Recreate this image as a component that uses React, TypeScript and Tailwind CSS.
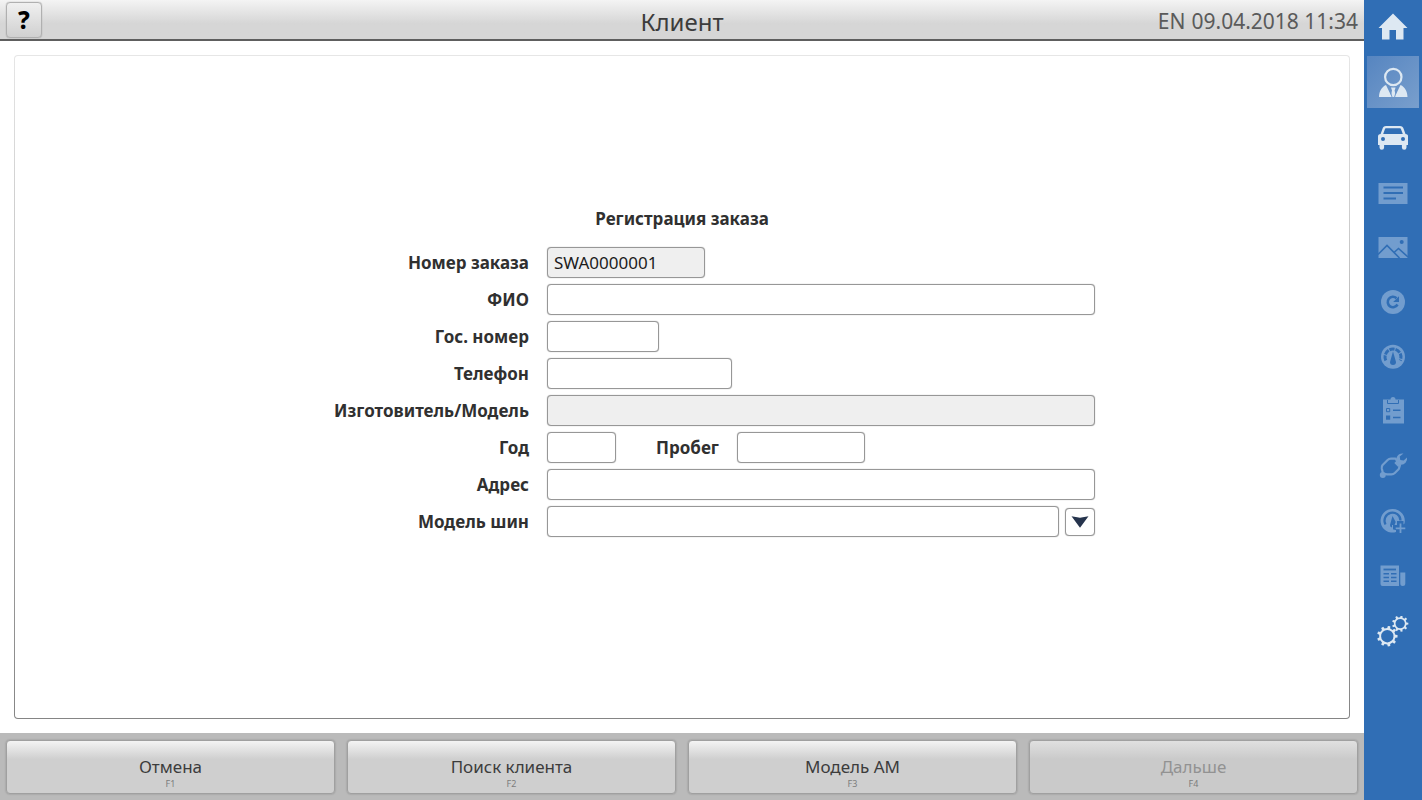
import type { InputHTMLAttributes, ReactNode } from "react"

const BAR = "#306eb5"

// Gear outline with square teeth
function gearPath(cx: number, cy: number, inner: number, outer: number, teeth: number) {
  const step = (Math.PI * 2) / teeth
  const points: string[] = []
  for (let i = 0; i < teeth; i++) {
    const a = i * step
    const corners: [number, number][] = [
      [inner, a - step * 0.26],
      [outer, a - step * 0.17],
      [outer, a + step * 0.17],
      [inner, a + step * 0.26],
    ]
    corners.forEach(([r, t]) => points.push(`${(cx + r * Math.cos(t)).toFixed(2)} ${(cy + r * Math.sin(t)).toFixed(2)}`))
  }
  return `M${points.join("L")}Z`
}

function Icon({ children }: { children: ReactNode }) {
  return (
    <svg viewBox="0 0 32 32" className="h-8 w-8" fill="currentColor" aria-hidden="true">
      {children}
    </svg>
  )
}

const HomeIcon = () => (
  <Icon>
    <path d="M16 2.500 1.500 17H5v11.500h7.500V19h6.500v9.500h7.500V17h4Z" />
  </Icon>
)

const ClientIcon = () => (
  <Icon>
    <circle cx="16.300" cy="11" r="8.200" fill="none" stroke="currentColor" strokeWidth="2.200" />
    <path d="M9 19 14.800 31H2c.2-5.500 2.500-10 7-12ZM23.500 19 17.700 31h12.800c-.2-5.500-2.500-10-7-12Z" />
    <path d="M14 21.500h4.600l-1 3 1.500 6.500h-5.600l1.500-6.500Z" />
    <path d="m11.800 20.500 3.200 10.500M20.800 20.500l-3.200 10.500" stroke="#6b94c8" strokeWidth=".9" fill="none" />
  </Icon>
)

const CarIcon = () => (
  <Icon>
    <path
      fillRule="evenodd"
      d="M9 5h14c2 0 3 1 3.500 2.500l2 5.500 1 .2c1 .3 1.500 1 1.500 2V24h-1.500v2.500a2.300 2.300 0 0 1-4.600 0V24H7.100v2.500a2.300 2.300 0 0 1-4.600 0V24H1v-8.500c0-1.200.6-2 1.600-2.300l1-.2 2-5.500C6 6 7 5 9 5Zm.2 2.200c-.7 0-1 .3-1.300 1L6.200 13h19.600L24 8.200c-.3-.7-.6-1-1.300-1ZM6 16a2 2 0 1 0 0 4 2 2 0 0 0 0-4Zm20 0a2 2 0 1 0 0 4 2 2 0 0 0 0-4Z"
    />
  </Icon>
)

const NotesIcon = () => (
  <Icon>
    <path d="M1.500 7h29v21h-29Z" />
    <path d="M6.500 11.500h19.500M6.500 17h19.500M6.500 22.500h12.500" stroke={BAR} strokeWidth="1.800" />
  </Icon>
)

const PhotoIcon = () => (
  <Icon>
    <path d="M1.500 6h29v21h-29Z" />
    <circle cx="24.700" cy="11" r="2" fill={BAR} />
    <path d="m1 23.500 9-9 12.500 12.500M17 21.500l4.500-4L31 26" stroke={BAR} strokeWidth="1.600" fill="none" />
  </Icon>
)

const RefreshIcon = () => (
  <Icon>
    <circle cx="16" cy="16" r="12" />
    <path d="M19.500 12.200a5.200 5.200 0 1 0 1 6.300" stroke={BAR} strokeWidth="2.600" fill="none" />
    <path d="M22 10.200v5.800h-5.800Z" fill={BAR} />
  </Icon>
)

const GaugeIcon = () => (
  <Icon>
    <circle cx="16" cy="15.700" r="12" />
    <path d="M8.800 19.500a8 8 0 1 1 14.400 0" stroke={BAR} strokeWidth="3" strokeDasharray="5.200 1" fill="none" />
    <path d="m16 10.500 3 10.500a3 3 0 0 1-6 0Z" fill={BAR} />
  </Icon>
)

const ChecklistIcon = () => (
  <Icon>
    <path d="M6 3.500h7.500a2.500 2.500 0 0 1 5 0H27v24H6Z" />
    <path d="M10.500 4v3.500h11V4" stroke={BAR} strokeWidth="1" fill="none" />
    <path d="M9.500 12.500h3.200v3.200H9.500Z" stroke={BAR} strokeWidth="1" fill="none" />
    <path d="M9 19.500h4.200v4.200H9Z" fill={BAR} />
    <path d="M16 14.200h7.500M16 21.500h7.500" stroke={BAR} strokeWidth="1.600" />
  </Icon>
)

const RepairIcon = () => (
  <Icon>
    <path
      d="M6 22.500 4.800 17.500c-.3-1.500 0-2.500.8-3.500l5-5c1-1 2-1.300 3.400-1.300h4.500l4.500 6.500-1.200 3.800-4 4c-1 1-2 1.300-3.300 1.300H10Z"
      stroke="currentColor"
      strokeWidth="2.200"
      strokeLinejoin="round"
      fill="none"
    />
    <circle cx="5.800" cy="24" r="3" />
    <path d="M26.500 2.500a6 6 0 0 0-7 7.300l-2.200 2.200 3.900 3.900 2.200-2.200A6 6 0 0 0 30 6.500l-3.300 3-3.400-.6-.6-3.300Z" />
  </Icon>
)

const GaugeAddIcon = () => (
  <Icon>
    <path d="M16 3a11.800 11.800 0 1 0 3 23v-2.500h-3V19h4v-4h6.500v3.500l1-1A11.800 11.800 0 0 0 16 3Z" />
    <path d="M8.500 18.500a8 8 0 1 1 15-4" stroke={BAR} strokeWidth="2.200" fill="none" />
    <path d="m15.500 10 3.200 6-1.200 3h-2.500v2.500a2.500 2.500 0 0 1-2-2.500Z" fill={BAR} />
    <path d="M23 15.500h1.500v5.500H29v3h-4.500v5H22v-5h-4.500v-3H22v-5.500Z" fill={BAR} />
    <path d="M23.500 17.500v9.500M18.700 22.300h9.600" stroke="currentColor" strokeWidth="1.800" />
  </Icon>
)

const NewsIcon = () => (
  <Icon>
    <path d="M3.500 4.500h18.500v20.500H5.500a2 2 0 0 1-2-2ZM23.300 11.500h5v11a2.500 2.500 0 0 1-5 0Z" />
    <path d="M6.500 8.500h12.500" stroke={BAR} strokeWidth="1.800" />
    <path d="M6.500 12.800h5.500M6.500 16.500h5.500M6.500 20.200h5.500M14 12.800h5.500M14 16.500h5.500M14 20.200h5.500" stroke={BAR} strokeWidth="1.500" />
  </Icon>
)

const SettingsIcon = () => (
  <Icon>
    <path fillRule="evenodd" d={`${gearPath(10.3, 20.200, 8.200, 10.300, 9)}M10.300 14a6.200 6.200 0 1 0 0 12.400 6.200 6.200 0 0 0 0-12.400Z`} />
    <path fillRule="evenodd" d={`${gearPath(23.2, 7.600, 6.400, 8.200, 9)}M23.200 2.900a4.700 4.700 0 1 0 0 9.400 4.700 4.700 0 0 0 0-9.400Z`} />
  </Icon>
)

const navItems = [
  { label: "Главная", icon: HomeIcon, state: "ready" },
  { label: "Клиент", icon: ClientIcon, state: "active" },
  { label: "Автомобиль", icon: CarIcon, state: "ready" },
  { label: "Заметки", icon: NotesIcon, state: "off" },
  { label: "Фото", icon: PhotoIcon, state: "off" },
  { label: "Компенсация", icon: RefreshIcon, state: "off" },
  { label: "Измерение", icon: GaugeIcon, state: "off" },
  { label: "Осмотр", icon: ChecklistIcon, state: "off" },
  { label: "Регулировка", icon: RepairIcon, state: "off" },
  { label: "Дополнительно", icon: GaugeAddIcon, state: "off" },
  { label: "Отчёт", icon: NewsIcon, state: "off" },
  { label: "Настройки", icon: SettingsIcon, state: "ready" },
]

const navStyles: Record<string, string> = {
  ready: "text-[#dde8f2]",
  active: "text-[#dde8f2] bg-linear-to-br from-[#5685c0] to-[#799fcd]",
  off: "text-[#729dce]",
}

const actions = [
  { label: "Отмена", hotkey: "F1" },
  { label: "Поиск клиента", hotkey: "F2" },
  { label: "Модель АМ", hotkey: "F3" },
  { label: "Дальше", hotkey: "F4", disabled: true },
]

function Label({ htmlFor, children }: { htmlFor: string; children: ReactNode }) {
  return (
    <label htmlFor={htmlFor} className="text-right text-[17px] leading-6 font-bold whitespace-nowrap text-[#303030]">
      {children}
    </label>
  )
}

function TextField({ className = "", ...props }: InputHTMLAttributes<HTMLInputElement>) {
  return (
    <input
      type="text"
      className={`h-[31px] min-w-0 rounded border border-[#979797] bg-white px-1.5 text-[17px] text-[#1c1c1c] shadow-[0_0_1px_#999] read-only:bg-[#efefef] ${className}`}
      {...props}
    />
  )
}

function Row({ id, label, children }: { id: string; label: string; children: ReactNode }) {
  return (
    <div className="grid grid-cols-[260px_1fr] items-center gap-x-[18px]">
      <Label htmlFor={id}>{label}</Label>
      <div className="flex min-w-0 items-center">{children}</div>
    </div>
  )
}

export default function App() {
  return (
    <div className="flex min-h-screen bg-white font-['Noto_Sans','Open_Sans',sans-serif] text-[#3c3c3c]">
      <div className="flex min-w-0 flex-1 flex-col">
        <header className="grid h-[41px] grid-cols-[1fr_auto_1fr] items-center border-b-2 border-[#5e5e5e] bg-linear-to-b from-[#f4f4f4] to-[#d6d6d6] to-60% px-1.5">
          <button
            type="button"
            aria-label="Справка"
            className="h-9 w-9 rounded border border-[#b0b0b0] bg-linear-to-b from-[#f0f0f0] to-[#d0d0d0] text-2xl leading-8 font-extrabold text-black shadow-[0_0_1px_#888]"
          >
            ?
          </button>
          <h1 className="pt-1 text-2xl">Клиент</h1>
          <div className="flex justify-end gap-1.5 pt-1 text-[21px] text-[#5a5a5a]">
            <span>EN</span>
            <time dateTime="2018-04-09T11:34">09.04.2018 11:34</time>
          </div>
        </header>

        <main className="flex flex-1 p-3.5">
          {/* 1px gradient frame */}
          <div className="flex flex-1 rounded bg-linear-to-b from-[#e6e6e6] to-[#858585] p-px">
            <form className="flex flex-1 flex-col items-center justify-center rounded-[3px] bg-white pb-[30px]">
              <h2 className="mb-4 text-[17px] leading-6 font-bold text-[#303030]">Регистрация заказа</h2>
              <div className="flex w-full max-w-[826px] flex-col gap-1.5">
                <Row id="order" label="Номер заказа">
                  <TextField id="order" className="w-[158px]" defaultValue="SWA0000001" readOnly />
                </Row>
                <Row id="name" label="ФИО">
                  <TextField id="name" className="flex-1" />
                </Row>
                <Row id="plate" label="Гос. номер">
                  <TextField id="plate" className="w-28" />
                </Row>
                <Row id="phone" label="Телефон">
                  <TextField id="phone" className="w-[185px]" />
                </Row>
                <Row id="vehicle" label="Изготовитель/Модель">
                  <TextField id="vehicle" className="flex-1" readOnly />
                </Row>
                <Row id="year" label="Год">
                  <TextField id="year" className="mr-10 w-[69px]" />
                  <Label htmlFor="mileage">Пробег</Label>
                  <TextField id="mileage" className="ml-[18px] w-32" />
                </Row>
                <Row id="address" label="Адрес">
                  <TextField id="address" className="flex-1" />
                </Row>
                <Row id="tires" label="Модель шин">
                  <TextField id="tires" className="flex-1" />
                  <button
                    type="button"
                    aria-label="Выбрать модель шин"
                    className="ml-1.5 flex h-7 w-[30px] items-center justify-center rounded border border-[#979797] bg-white shadow-[0_0_1px_#999]"
                  >
                    <svg viewBox="0 0 18 12" className="h-3 w-[18px]" aria-hidden="true">
                      <path d="M.5 .3 9 1.800l8.500-1.500L9 11.800Z" fill="#26344d" />
                    </svg>
                  </button>
                </Row>
              </div>
            </form>
          </div>
        </main>

        <footer className="grid grid-cols-4 gap-3 bg-[#bababa] px-1.5 pt-[7px] pb-1.5">
          {actions.map(({ label, hotkey, disabled }) => (
            <button
              key={hotkey}
              type="button"
              disabled={disabled}
              className="flex h-[54px] flex-col items-center justify-end rounded border border-[#a0a0a0] bg-linear-to-b from-[#f4f4f4] to-[#cfcfcf] to-35% pb-[3px] text-[#3c3c3c] shadow-[0_0_2px_#888] disabled:from-[#e0e0e0] disabled:to-[#cacaca] disabled:text-[#929292]"
            >
              <span className="text-[17px] leading-[22px]">{label}</span>
              <span className="text-[9px] leading-3 text-[#7c7c7c]">{hotkey}</span>
            </button>
          ))}
        </footer>
      </div>

      <nav className="flex w-[58px] flex-col items-center gap-[3px] bg-[#306eb5] pt-px">
        {navItems.map(({ label, icon: NavIcon, state }) => (
          <button
            key={label}
            type="button"
            aria-label={label}
            aria-current={state === "active" ? "page" : undefined}
            disabled={state === "off"}
            className={`flex h-[52px] w-[52px] items-center justify-center ${navStyles[state]}`}
          >
            <NavIcon />
          </button>
        ))}
      </nav>
    </div>
  )
}
